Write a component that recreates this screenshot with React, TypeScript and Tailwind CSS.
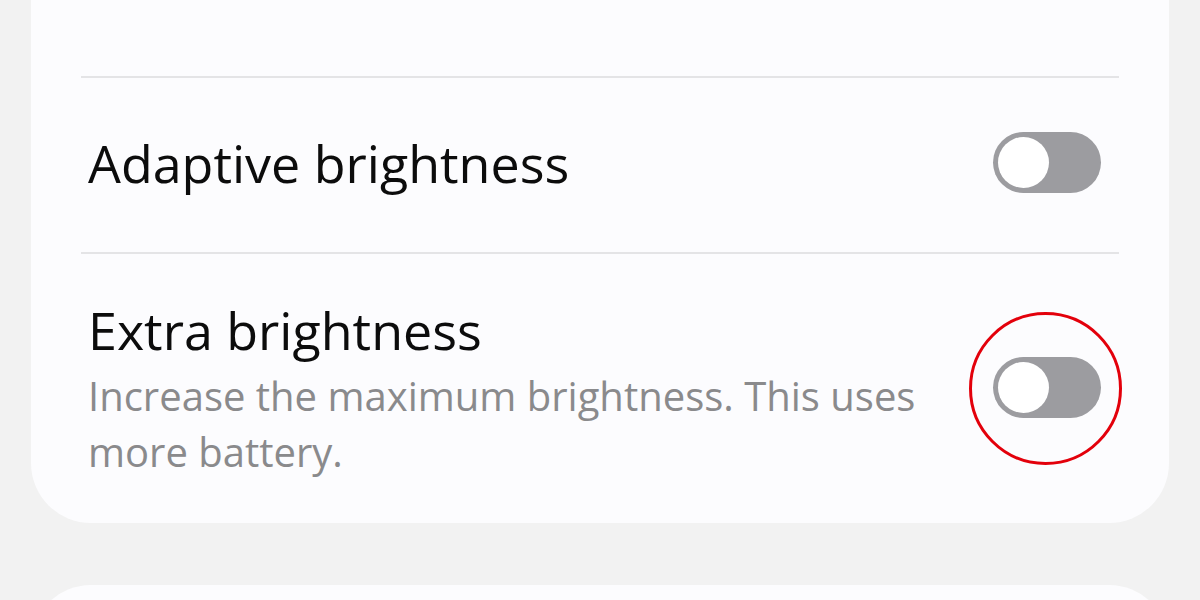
import React from "react";

function Toggle({ circled }: { circled?: boolean }) {
  return (
    <div className={"relative w-[108px] h-[61px] shrink-0 " + (circled ? "mb-[4px]" : "")}>
      <div className="w-[108px] h-[61px] rounded-full bg-[#9c9ca0] flex items-center pl-[5px]">
        <div className="w-[51px] h-[51px] rounded-full bg-white" />
      </div>
      {circled && (
        <div className="absolute left-[-24px] top-[-45px] w-[153px] h-[153px] rounded-full border-[3px] border-[#e3000b]" />
      )}
    </div>
  );
}

export default function App() {
  return (
    <div
      className="w-[1200px] h-[600px] overflow-hidden bg-[#f2f2f2] px-[31px] flex flex-col"
      style={{ fontFamily: "'Open Sans', sans-serif" }}
    >
      <div className="bg-[#fcfcfe] rounded-b-[60px] pt-[76px] shrink-0">
        <div className="mx-[50px] h-[2px] bg-[#e4e4e6]" />
        <div className="h-[174px] flex items-center justify-between pl-[57px] pr-[68px] pb-[5px]">
          <div className="text-[52px] leading-none text-[#0c0c0c]">Adaptive brightness</div>
          <Toggle />
        </div>
        <div className="mx-[50px] h-[2px] bg-[#e4e4e6]" />
        <div className="h-[269px] flex items-center justify-between pl-[57px] pr-[68px] pt-[2px]">
          <div className="w-[850px]">
            <div className="text-[52px] leading-[60px] text-[#0c0c0c]">Extra brightness</div>
            <div className="text-[40px] leading-[56px] text-[#8a8a8c] mt-[8px]">
              Increase the maximum brightness. This uses more battery.
            </div>
          </div>
          <Toggle circled />
        </div>
      </div>
      <div className="mt-[62px] bg-[#fcfcfe] rounded-t-[60px] h-[200px] shrink-0" />
    </div>
  );
}
